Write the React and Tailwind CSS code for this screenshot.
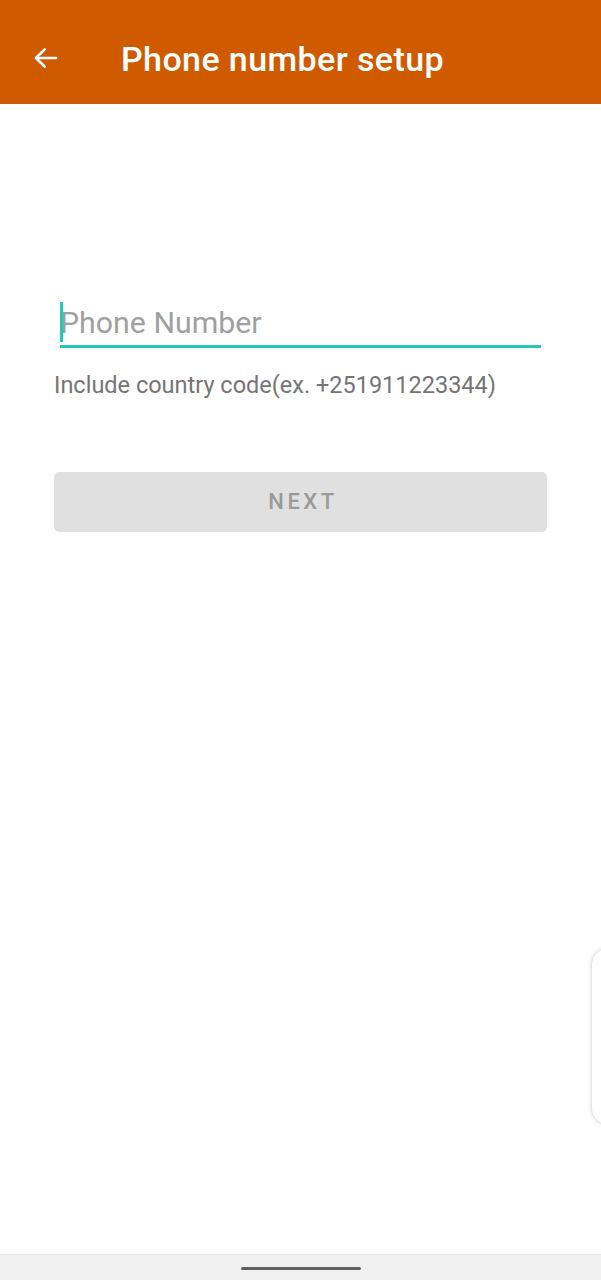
import React from "react";

export default function App() {
  return (
    <div
      className="relative w-[601px] h-[1280px] bg-white flex flex-col overflow-hidden"
      style={{ fontFamily: "Roboto, 'Liberation Sans', sans-serif" }}
    >
      {/* app bar */}
      <div className="h-[104px] bg-[#d05a00] flex items-center shrink-0 pt-[12px]">
        <div className="w-[121px] pl-[30px] flex items-center">
          <svg width="32" height="32" viewBox="0 0 24 24" fill="none" stroke="#fff" strokeWidth="2" strokeLinecap="round" strokeLinejoin="round">
            <path d="M19.5 12H5" />
            <path d="M11 5.5 4.5 12l6.5 6.5" />
          </svg>
        </div>
        <h1 className="text-white text-[34px] font-medium tracking-[0.4px] leading-none mt-[2px]">
          Phone number setup
        </h1>
      </div>

      {/* form */}
      <div className="flex-1 flex flex-col px-[54px] pt-[198px]">
        <div className="ml-[6px] mr-[6px] relative border-b-[3px] border-[#26c6b9] h-[46px] flex items-center">
          <span className="absolute left-0 top-0 w-[3px] h-[40px] bg-[#26c6b9]" />
          <span className="text-[30.3px] text-[#a0a0a0] leading-none -mt-[1px]">Phone Number</span>
        </div>
        <p className="mt-[26px] text-[23.5px] text-[#757575] leading-none">
          Include country code(ex. +251911223344)
        </p>
        <button className="mt-[74px] h-[60px] w-full rounded-[5px] bg-[#e0e0e0] text-[#9a9a9a] text-[22px] font-medium tracking-[3.5px] pl-[5px]">
          NEXT
        </button>
      </div>

      {/* edge panel handle */}
      <div className="absolute right-[-20px] top-[948px] w-[30px] h-[177px] rounded-l-[16px] bg-white border border-[#e4e4e4] shadow-[0_0_4px_rgba(0,0,0,0.12)]" />

      {/* nav bar */}
      <div className="h-[26px] bg-[#f0f0f0] border-t border-[#e6e6e6] flex items-center justify-center shrink-0">
        <div className="w-[120px] h-[3px] rounded-full bg-[#5f5f5f] mt-[2px]" />
      </div>
    </div>
  );
}
